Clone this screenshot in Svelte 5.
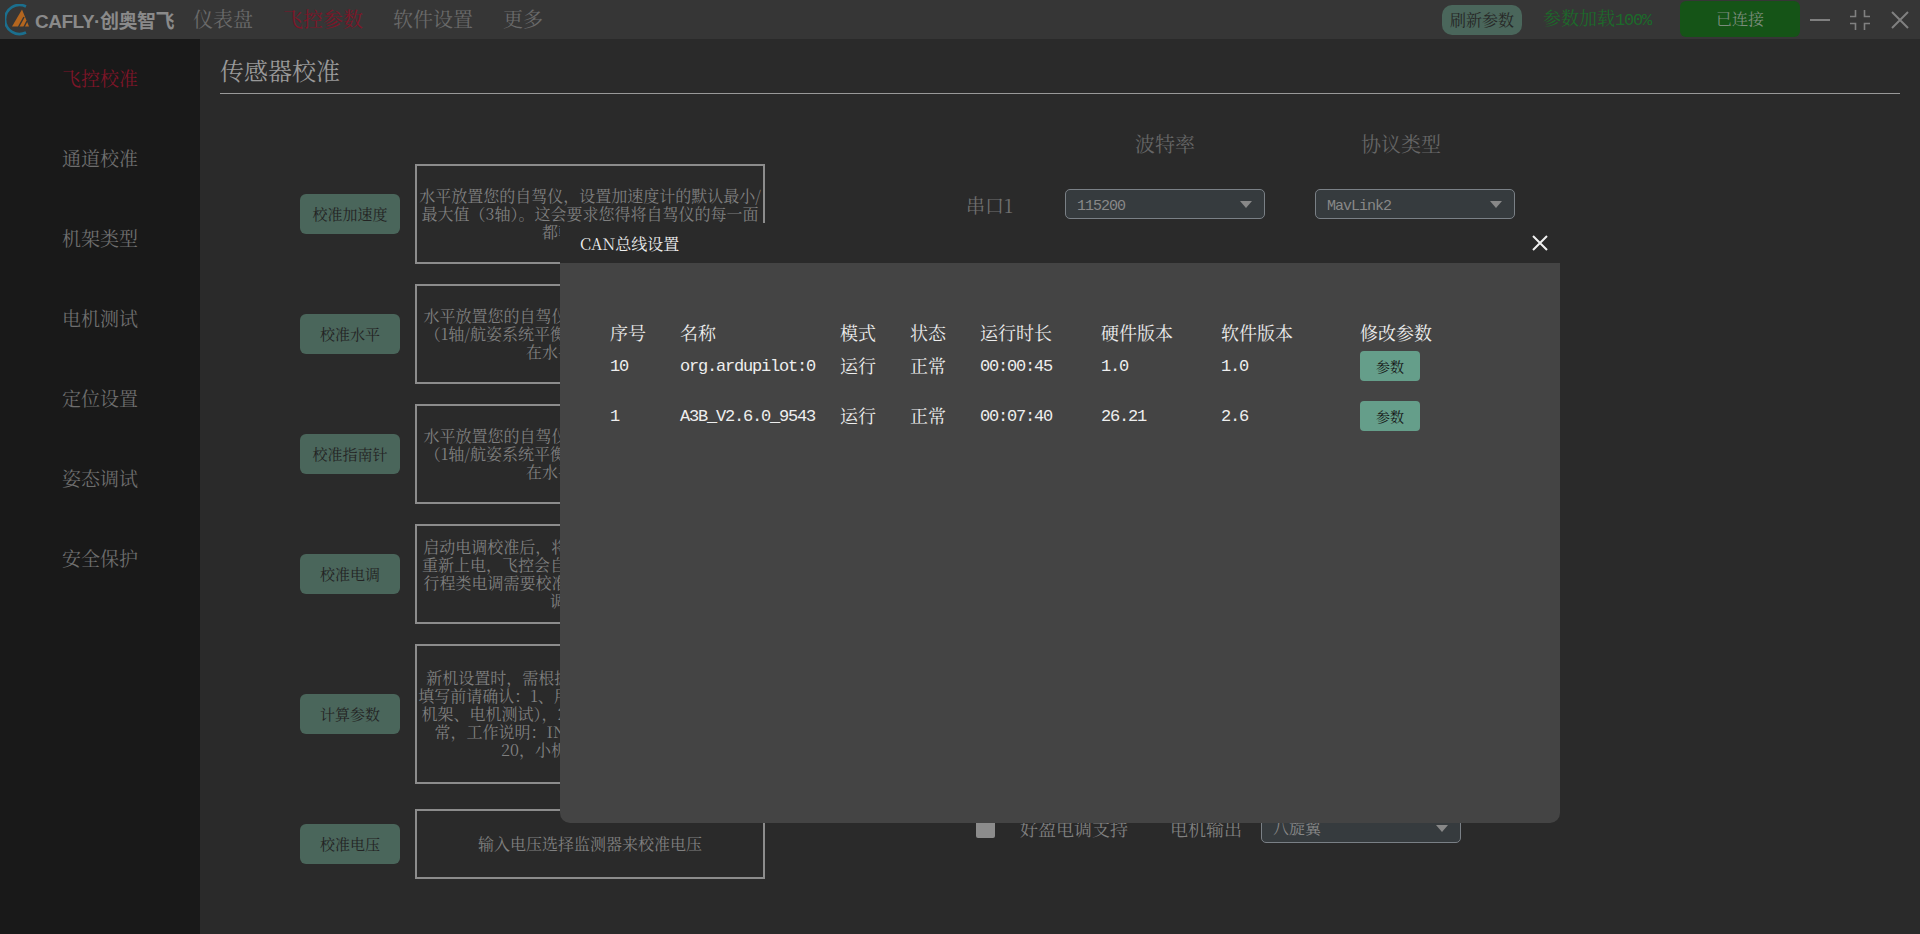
<script>
  const nav = ['仪表盘', '飞控参数', '软件设置', '更多'];
  const side = ['飞控校准', '通道校准', '机架类型', '电机测试', '定位设置', '姿态调试', '安全保护'];
  const rows = [
    { label: '校准加速度', h: 100, lines: ['水平放置您的自驾仪，设置加速度计的默认最小/', '最大值（3轴）。这会要求您得将自驾仪的每一面', '都朝上放置好'] },
    { label: '校准水平', h: 100, lines: ['水平放置您的自驾仪，并点击按钮校准1次水平.', '（1轴/航姿系统平衡校准），保持飞控静止不动.', '在水平桌面上校准'] },
    { label: '校准指南针', h: 100, lines: ['水平放置您的自驾仪，并点击按钮校准1次航向.', '（1轴/航姿系统平衡校准），保持飞控静止不动.', '在水平桌面上校准'] },
    { label: '校准电调', h: 100, lines: ['启动电调校准后，将遥控器油门推到100%断电.', '重新上电，飞控会自动进入校准流程并保存数据', '行程类电调需要校准油门行程范围1次，其它电.', '调无需校准'] },
    { label: '计算参数', h: 140, lines: ['新机设置时，需根据飞机实际情况填写参数1次', '填写前请确认：1、用户已经完成各项校准（遥控', '机架、电机测试），2、飞机各项功能都已检查好', '常，工作说明：INS_GYRO_FILTER 默认值', '20，小机型可以适当调高'] },
    { label: '校准电压', h: 70, lines: ['输入电压选择监测器来校准电压'] }
  ];
  const cols = ['序号', '名称', '模式', '状态', '运行时长', '硬件版本', '软件版本', '修改参数'];
  const nodes = [
    ['10', 'org.ardupilot:0', '运行', '正常', '00:00:45', '1.0', '1.0'],
    ['1', 'A3B_V2.6.0_9543', '运行', '正常', '00:07:40', '26.21', '2.6']
  ];
  const latin = /^[\x20-\x7e]+$/;
</script>

<div class="app">
  <header class="topbar">
    <div class="logo">
      <svg width="30" height="32" viewBox="0 0 30 32" fill="none">
        <path d="M21 2.5A14.5 14.5 0 1 0 21 28.5" stroke="#1b6f8e" stroke-width="2.6" />
        <path d="M17 5.5 L24 22.5 L7 22.5 Z" fill="#b4661f" />
        <path d="M13.5 23 L19 13M19 23 L22 17" stroke="#363636" stroke-width="1.5" />
      </svg>
      <span>CAFLY·创奥智飞</span>
    </div>
    <nav>
      {#each nav as item, i}
        <span class:active={i === 1}>{item}</span>
      {/each}
    </nav>
    <div class="tools">
      <button class="refresh">刷新参数</button>
      <span class="progress">参数加载<span class="lat">100%</span></span>
      <button class="link">已连接</button>
      <svg class="win" width="110" height="38" viewBox="0 0 110 38" fill="none" stroke="#808080" stroke-width="2">
        <path d="M10 19H30" />
        <path d="M55.5 9V15.5H50M64.5 9V15.5H70M55.5 29V22.5H50M64.5 29V22.5H70" stroke-width="1.6" />
        <path d="M92 11L108 27M108 11L92 27" />
      </svg>
    </div>
  </header>

  <div class="main">
    <aside>
      {#each side as item, i}
        <div class="side-item" class:active={i === 0}>{item}</div>
      {/each}
    </aside>

    <section class="content">
      <h1>传感器校准</h1>
      <div class="panels">
        <div class="left">
          {#each rows as row}
            <div class="row">
              <button class="action">{row.label}</button>
              <div class="desc" style="height: {row.h}px">
                <p>
                  {#each row.lines as line}
                    <span>{line}</span>
                  {/each}
                </p>
              </div>
            </div>
          {/each}
        </div>

        <div class="right">
          <div class="labels">
            <span class="baud">波特率</span>
            <span class="proto">协议类型</span>
          </div>
          <div class="serial">
            <span class="port">串口1</span>
            <div class="select"><span class="lat">115200</span><i></i></div>
            <div class="select"><span class="lat">MavLink2</span><i></i></div>
          </div>
          <div class="bottom">
            <span class="check"></span>
            <span class="opt">好盈电调支持</span>
            <span class="opt motor">电机输出</span>
            <div class="select"><span>八旋翼</span><i></i></div>
          </div>
        </div>
      </div>
    </section>
  </div>

  <div class="dialog">
    <div class="dialog-head">
      <span>CAN总线设置</span>
      <svg width="18" height="18" viewBox="0 0 18 18" stroke="#f0f0f0" stroke-width="2"><path d="M2 2L16 16M16 2L2 16" /></svg>
    </div>
    <div class="dialog-body">
      <div class="tr head">
        {#each cols as c}
          <div>{c}</div>
        {/each}
      </div>
      {#each nodes as node}
        <div class="tr">
          {#each node as cell}
            <div class="td" class:lat={latin.test(cell)}>{cell}</div>
          {/each}
          <div><button class="param">参数</button></div>
        </div>
      {/each}
    </div>
  </div>
</div>

<style>
  :global(body) {
    margin: 0;
    background: #2a2a2a;
  }
  .app {
    position: relative;
    width: 1920px;
    height: 934px;
    overflow: hidden;
    display: flex;
    flex-direction: column;
    background: #2a2a2a;
    color: #808080;
    font-family: "Noto Serif CJK SC", "Liberation Serif", "Noto Sans CJK SC", serif;
  }
  button {
    border: none;
    padding: 0;
    font-family: inherit;
    cursor: pointer;
  }
  .lat {
    font-family: "Liberation Mono", "Noto Sans CJK SC", monospace;
  }

  .topbar {
    height: 39px;
    flex: none;
    display: flex;
    align-items: center;
    background: #363636;
  }
  .logo {
    width: 193px;
    display: flex;
    align-items: center;
    padding-left: 5px;
    box-sizing: border-box;
    flex: none;
  }
  .logo span {
    font-family: "Liberation Sans", "Noto Sans CJK SC", sans-serif;
    font-weight: 700;
    font-size: 19px;
    white-space: nowrap;
    color: #8a8a8a;
    letter-spacing: -0.5px;
  }
  nav {
    display: flex;
    gap: 30px;
    font-size: 20px;
    color: #6a6a6a;
    padding-bottom: 2px;
  }
  nav .active {
    color: #7d1528;
  }
  .tools {
    margin-left: auto;
    display: flex;
    align-items: center;
    height: 39px;
  }
  .refresh {
    width: 80px;
    height: 30px;
    border-radius: 10px;
    background: #4a665b;
    color: #262626;
    font-size: 16px;
    margin-right: 21px;
  }
  .progress {
    font-size: 18px;
    color: #1c6a2a;
    width: 137px;
    white-space: nowrap;
    padding-bottom: 5px;
  }
  .progress .lat {
    font-size: 17px;
    letter-spacing: -1.2px;
  }
  .link {
    width: 120px;
    height: 36px;
    margin-top: -2px;
    border-radius: 6px;
    background: #155417;
    color: #7c8c7c;
    font-size: 16px;
  }
  .win {
    display: block;
    margin-right: 10px;
  }

  .main {
    flex: 1;
    display: flex;
    min-height: 0;
  }
  aside {
    width: 200px;
    flex: none;
    background: #191919;
    padding-top: 19px;
    box-sizing: border-box;
  }
  .side-item {
    height: 80px;
    line-height: 40px;
    text-align: center;
    font-size: 19px;
    color: #6e6e6e;
  }
  .side-item.active {
    color: #7d1528;
  }

  .content {
    flex: 1;
    padding: 0 20px;
    min-width: 0;
  }
  h1 {
    margin: 0;
    height: 55px;
    box-sizing: border-box;
    padding-top: 14px;
    line-height: 34px;
    font-size: 24px;
    font-weight: 400;
    color: #999;
    border-bottom: 1px solid #999;
  }
  .panels {
    display: flex;
  }
  .left {
    margin-left: 80px;
    padding-top: 70px;
    width: 465px;
    flex: none;
  }
  .row {
    display: flex;
    align-items: center;
    gap: 15px;
    margin-bottom: 20px;
  }
  .row:last-child {
    margin-top: 25px;
  }
  .action {
    width: 100px;
    height: 40px;
    flex: none;
    border-radius: 6px;
    background: #4a665b;
    color: #232323;
    font-size: 15px;
    padding-bottom: 2px;
  }
  .desc {
    width: 350px;
    box-sizing: border-box;
    border: 2px solid #8c8c8c;
    display: flex;
    align-items: center;
    justify-content: center;
  }
  .desc p {
    margin: 0;
    font-size: 16px;
    line-height: 18px;
    text-align: center;
    color: #808080;
  }
  .desc span {
    display: block;
    white-space: nowrap;
  }

  .right {
    margin-left: 201px;
    padding-top: 38px;
    flex: none;
  }
  .labels {
    display: flex;
    height: 24px;
    line-height: 24px;
    font-size: 20px;
    color: #666;
  }
  .baud {
    margin-left: 169px;
  }
  .proto {
    margin-left: 166px;
  }
  .serial {
    display: flex;
    align-items: center;
    margin-top: 33px;
    gap: 50px;
  }
  .port {
    width: 49px;
    font-size: 19px;
    white-space: nowrap;
    color: #707070;
  }
  .select {
    position: relative;
    width: 200px;
    height: 30px;
    box-sizing: border-box;
    border: 1px solid #7a8086;
    border-radius: 5px;
    background: #363b3e;
    color: #888;
    font-size: 16px;
    line-height: 28px;
    padding-left: 11px;
  }
  .select .lat {
    font-size: 15px;
    letter-spacing: -1px;
  }
  .select i {
    position: absolute;
    right: 12px;
    top: 11px;
    width: 0;
    height: 0;
    border-left: 6px solid transparent;
    border-right: 6px solid transparent;
    border-top: 7px solid #888;
  }
  .bottom {
    display: flex;
    align-items: center;
    margin-top: 594px;
    margin-left: 10px;
    font-size: 18px;
    color: #808080;
  }
  .check {
    width: 19px;
    height: 20px;
    border-radius: 2px;
    background: #8c8c8c;
    margin-right: 25px;
  }
  .opt {
    white-space: nowrap;
  }
  .motor {
    margin-left: 42px;
    margin-right: 19px;
  }

  .dialog {
    position: absolute;
    left: 560px;
    top: 223px;
    width: 1000px;
    height: 600px;
    display: flex;
    flex-direction: column;
    border-radius: 0 0 10px 10px;
    overflow: hidden;
  }
  .dialog-head {
    height: 40px;
    flex: none;
    display: flex;
    align-items: center;
    justify-content: space-between;
    padding: 0 11px 0 20px;
    background: #2a2a2a;
    color: #f0f0f0;
    font-size: 16px;
  }
  .dialog-body {
    flex: 1;
    background: #444;
    padding: 56px 0 0 50px;
  }
  .tr {
    display: grid;
    grid-template-columns: 70px 160px 70px 70px 121px 120px 139px 80px;
    height: 30px;
    align-items: center;
    margin-bottom: 20px;
    color: #eee;
    font-size: 18px;
    white-space: nowrap;
  }
  .tr.head {
    height: 24px;
    margin-bottom: 8px;
  }
  .td {
    padding-bottom: 3px;
  }
  .td.lat {
    font-size: 17px;
    letter-spacing: -1.2px;
    padding-bottom: 0;
  }
  .param {
    display: block;
    width: 60px;
    height: 30px;
    border-radius: 4px;
    background: #659e8a;
    color: #141414;
    font-size: 14px;
  }
</style>
